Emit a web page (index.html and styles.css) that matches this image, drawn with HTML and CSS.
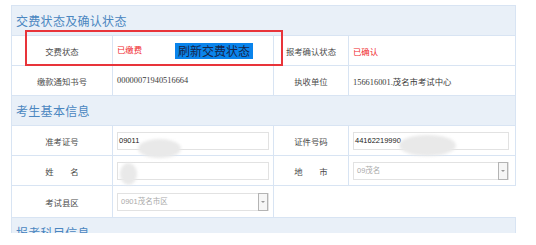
FILE: index.html
```html
<!DOCTYPE html>
<html lang="zh-CN">
  <head>
    <meta charset="UTF-8" />
    <meta name="viewport" content="width=device-width, initial-scale=1.0" />
    <title>报名信息</title>
    <link rel="stylesheet" href="styles.css">
  </head>
  <body>
    <div class="panel">
      <table class="info">
        <colgroup>
          <col class="c1" />
          <col class="c2" />
          <col class="c3" />
          <col class="c4" />
        </colgroup>
        <tr class="sec">
          <th colspan="4">交费状态及确认状态</th>
        </tr>
        <tr class="row">
          <td class="lbl">交费状态</td>
          <td class="val"><span class="red">已缴费</span><span class="btn">刷新交费状态</span></td>
          <td class="lbl">报考确认状态</td>
          <td class="val"><span class="red">已确认</span></td>
        </tr>
        <tr class="row">
          <td class="lbl">缴款通知书号</td>
          <td class="val num">00000071940516664</td>
          <td class="lbl">执收单位</td>
          <td class="val num">156616001.茂名市考试中心</td>
        </tr>
        <tr class="sec">
          <th colspan="4">考生基本信息</th>
        </tr>
        <tr class="row">
          <td class="lbl">准考证号</td>
          <td class="val"><div class="field">09011</div></td>
          <td class="lbl">证件号码</td>
          <td class="val wide"><div class="field">44162219990</div></td>
        </tr>
        <tr class="row">
          <td class="lbl">姓　　名</td>
          <td class="val"><div class="field"></div></td>
          <td class="lbl">地　　市</td>
          <td class="val wide">
            <div class="field sel">09茂名<span class="arrow"></span></div>
          </td>
        </tr>
        <tr class="row last">
          <td class="lbl">考试县区</td>
          <td class="val">
            <div class="field sel">0901茂名市区<span class="arrow"></span></div>
          </td>
        </tr>
        <tr class="sec">
          <th colspan="4">报考科目信息</th>
        </tr>
      </table>

      <!-- annotation box and blurred-out personal data -->
      <div class="mark"></div>
      <div class="smudge s1"></div>
      <div class="smudge s2"></div>
      <div class="smudge s3"></div>
    </div>
  </body>
</html>
```

FILE: styles.css
```css
body {
    margin: 0;
    background-color: #fff;
    font-family: "Noto Sans CJK SC", sans-serif;
}
.panel {
    position: relative;
    margin: 5px 0 0 11px;
    width: 505px;
    height: 228px;
    overflow: hidden;
}
.info {
    width: 504px;
    border-collapse: collapse;
    table-layout: fixed;
}
.c1 { width: 101px; }
.c2 { width: 161px; }
.c3 { width: 75px; }
.c4 { width: 167px; }
th, td {
    border: 1px solid #d8e4f3;
    padding: 0;
}
.sec th {
    height: 29px;
    background-color: #e9f0f8;
    color: #4a86c0;
    font-size: 12px;
    font-weight: normal;
    text-align: left;
    padding-left: 4px;
    letter-spacing: 0.3px;
}
.row td {
    height: 29px;
}
.row.last td {
    height: 31px;
}
.lbl {
    text-align: center;
    color: #4a4a4a;
    font-size: 8.4px;
}
.val {
    padding-left: 4px;
    font-size: 8.4px;
    color: #333;
}
.num {
    font-family: "Liberation Serif", "Noto Sans CJK SC", serif;
    color: #3a3a3a;
}
.red {
    color: #f0282d;
}
.btn {
    display: inline-block;
    margin-left: 33px;
    width: 78px;
    height: 16px;
    line-height: 16px;
    background-color: #0a84ec;
    color: #15254a;
    font-size: 12px;
    text-align: center;
    vertical-align: middle;
}
.field {
    position: relative;
    width: 152px;
    height: 18px;
    box-sizing: border-box;
    border: 1px solid #e2e2e2;
    font-family: "Liberation Sans", "Noto Sans CJK SC", sans-serif;
    font-size: 7.5px;
    line-height: 16px;
    padding-left: 1px;
    color: #222;
}
.wide .field {
    width: 156px;
}
.sel {
    color: #aaa;
    padding-left: 3px;
}
.arrow {
    position: absolute;
    right: 0;
    top: -1px;
    width: 10px;
    height: 18px;
    box-sizing: border-box;
    border: 1px solid #b4b4b4;
    background-color: #f6f6f6;
}
.arrow::after {
    content: "";
    position: absolute;
    left: 2px;
    top: 7px;
    border-left: 2px solid transparent;
    border-right: 2px solid transparent;
    border-top: 2px solid #999;
}
.mark {
    position: absolute;
    left: 14px;
    top: 25px;
    width: 258px;
    height: 36px;
    box-sizing: border-box;
    border: 2px solid #e8343a;
}
.smudge {
    position: absolute;
    background-color: #e9e9e9;
    border-radius: 50%;
    filter: blur(1.5px);
}
.s1 { left: 127px; top: 134px; width: 43px; height: 19px; }
.s2 { left: 109px; top: 158px; width: 17px; height: 22px; }
.s3 { left: 388px; top: 130px; width: 57px; height: 21px; }
```
